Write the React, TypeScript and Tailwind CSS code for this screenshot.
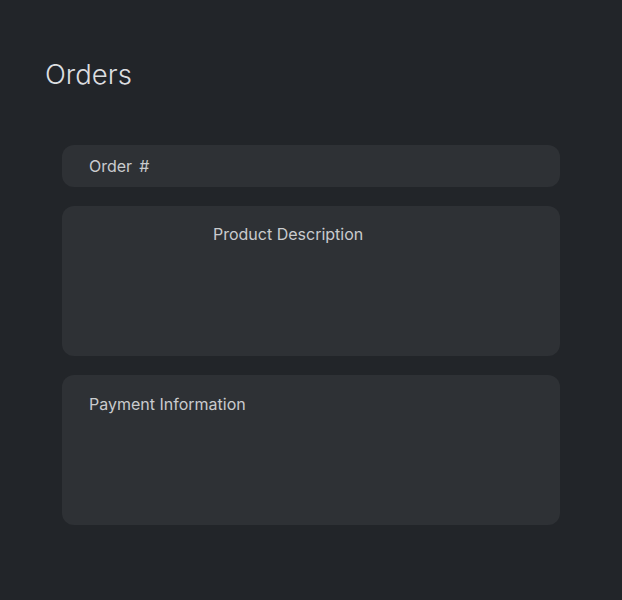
import React from 'react';

function Card({ children, className }: { children?: React.ReactNode; className?: string }) {
  return (
    <div className={`rounded-xl bg-[#2e3135] text-[16px] text-[#c9cbce] ${className ?? ''}`}>
      {children}
    </div>
  );
}

export default function App() {
  return (
    <div className="min-h-[600px] w-full bg-[#222529] font-['Inter','Noto_Sans',sans-serif]">
      <div className="pt-[56px] pl-[45px]">
        <h1 className="text-[27.5px] font-light leading-[36px] text-[#dcdee0]">Orders</h1>
      </div>
      <div className="mt-[53px] ml-[62px] flex w-[498px] flex-col gap-[19px]">
        <Card className="flex h-[42px] items-center pl-[27px]">
          <span>Order</span>
          <span className="ml-[7px]">#</span>
        </Card>
        <Card className="h-[150px] pt-[16px] pl-[151px]">
          <span className="leading-[20px]">Product Description</span>
        </Card>
        <Card className="h-[150px] pt-[17px] pl-[27px]">
          <span className="leading-[20px]">Payment Information</span>
        </Card>
      </div>
    </div>
  );
}
